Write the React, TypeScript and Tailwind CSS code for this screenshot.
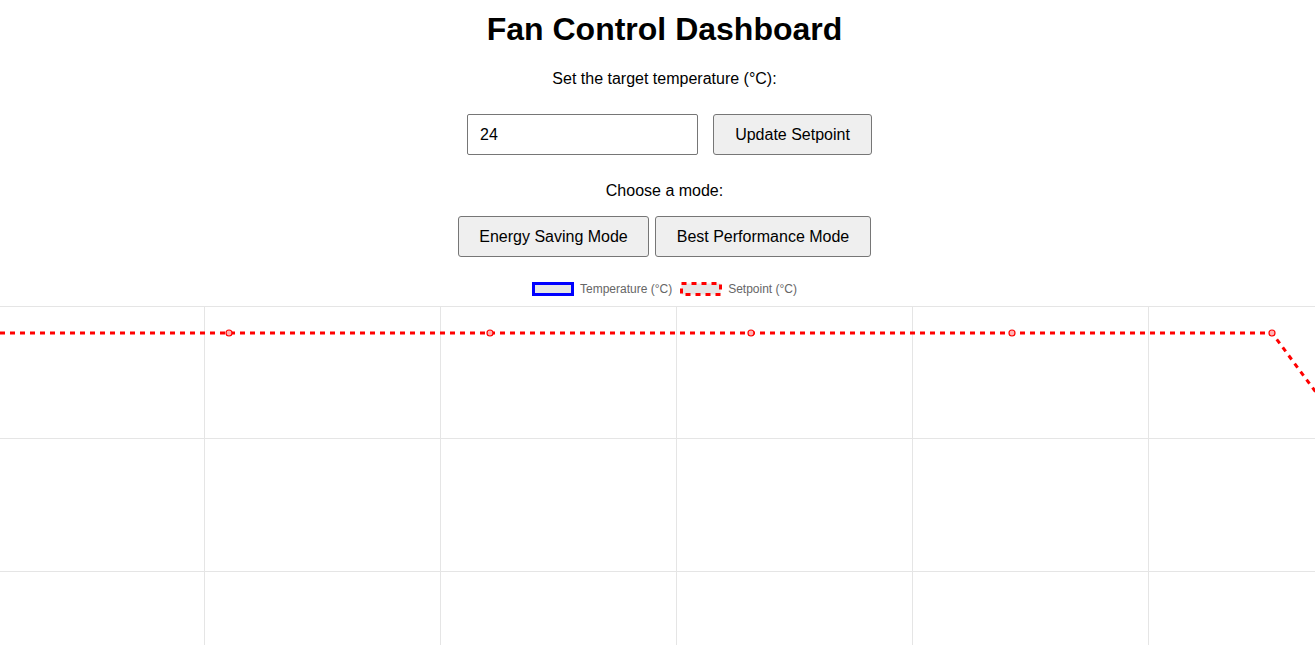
import React from "react";

const gridX = [204, 440, 676, 912, 1148];
const gridY = [7, 139, 272];
const pts = [229, 490, 751, 1012, 1272];

export default function App() {
  return (
    <div
      className="h-screen w-full overflow-hidden bg-white text-black"
      style={{ fontFamily: '"Liberation Sans", Arial, sans-serif' }}
    >
      <div className="pl-[14px] text-center">
        <h1 className="mt-[11px] text-[32px] font-bold leading-[37px]">Fan Control Dashboard</h1>
        <p className="mt-[22px] text-[16px] leading-[18px]">Set the target temperature (°C):</p>
        <div className="mt-[26px] flex justify-center gap-[15px] pl-[10px]">
          <input
            type="text"
            defaultValue="24"
            className="h-[41px] w-[231px] rounded-[2px] border border-[#767676] px-[12px] text-[16px] outline-none"
            style={{ fontFamily: '"Liberation Sans", Arial, sans-serif' }}
          />
          <button className="h-[41px] w-[159px] rounded-[3px] border border-[#767676] bg-[#efefef] text-[16px]">
            Update Setpoint
          </button>
        </div>
        <p className="mt-[27px] text-[16px] leading-[18px]">Choose a mode:</p>
        <div className="mt-[16px] flex justify-center gap-[6px]">
          <button className="h-[41px] w-[191px] rounded-[3px] border border-[#767676] bg-[#efefef] text-[16px]">
            Energy Saving Mode
          </button>
          <button className="h-[41px] w-[216px] rounded-[3px] border border-[#767676] bg-[#efefef] text-[16px]">
            Best Performance Mode
          </button>
        </div>
        <div className="mt-[22px] flex h-[20px] items-center justify-center text-[12px] text-[#666666]">
          <svg width="42" height="14" className="block">
            <rect x="1.5" y="1.5" width="39" height="11" fill="#e6e6e6" stroke="#0000ff" strokeWidth="3" />
          </svg>
          <span className="ml-[6px]">Temperature (°C)</span>
          <svg width="42" height="14" className="ml-[8px] block">
            <rect x="1.5" y="1.5" width="39" height="11" fill="#e6e6e6" stroke="#ff0000" strokeWidth="3" strokeDasharray="5 5" />
          </svg>
          <span className="ml-[6px]">Setpoint (°C)</span>
        </div>
      </div>
      <svg width="1315" height="350" className="block">
        {gridY.map((y) => (
          <line key={"h" + y} x1="0" x2="1315" y1={y + 0.5} y2={y + 0.5} stroke="#e5e5e5" strokeWidth="1" />
        ))}
        {gridX.map((x) => (
          <line key={"v" + x} x1={x + 0.5} x2={x + 0.5} y1="7" y2="350" stroke="#e5e5e5" strokeWidth="1" />
        ))}
        <polyline
          points="-40,34 1272,34 1533,386"
          fill="none"
          stroke="#ff0000"
          strokeWidth="3"
          strokeDasharray="5 5"
        />
        {pts.map((x) => (
          <circle key={x} cx={x} cy="34" r="3" fill="#ffb3b3" stroke="#ff0000" strokeWidth="1.2" />
        ))}
      </svg>
    </div>
  );
}
